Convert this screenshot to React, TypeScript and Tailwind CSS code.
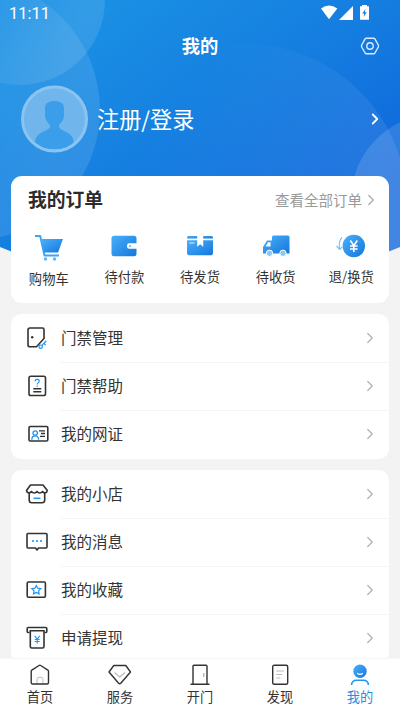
import type { ReactNode } from 'react';
import { ChevronRight } from 'lucide-react';

interface Item {
    label: string;
    icon: ReactNode;
}

const DARK = '#333333';
const BLUE = '#2196f3';

const orders: Item[] = [
    {
        label: '购物车',
        icon: (
            <svg width="30" height="28" viewBox="0 0 30 28" fill="none">
                <path d="M1 2H6.2L10.5 21.500H25" stroke="#3fa3f3" strokeWidth="2" strokeLinejoin="round" />
                <path d="M7.200 5H29L24 18.500H10.200Z" fill="url(#blue)" />
                <circle cx="11.5" cy="25" r="1.7" fill="#5fb4f5" />
                <circle cx="20.5" cy="25" r="1.7" fill="#5fb4f5" />
            </svg>
        ),
    },
    {
        label: '待付款',
        icon: (
            <svg width="26" height="22" viewBox="0 0 26 22" fill="none">
                <rect x="0.5" y="0.7" width="25" height="20.6" rx="2.5" fill="url(#blue)" />
                <path d="M26 8.3H18.2A2.2 2.2 0 0 0 16 10.5V11.5A2.2 2.2 0 0 0 18.2 13.7H26Z" fill="#fff" />
                <circle cx="19" cy="11" r="1" fill="#4aa9f3" />
            </svg>
        ),
    },
    {
        label: '待发货',
        icon: (
            <svg width="28" height="22" viewBox="0 0 28 22" fill="none">
                <path d="M1 3.500V2.500Q1 1 2.500 1H25.500Q27 1 27 2.500V3.500Z" fill="url(#blue)" />
                <path d="M1 5.200H27V18Q27 20.300 24.700 20.300H3.300Q1 20.300 1 18Z" fill="url(#blue)" />
                <path d="M11.200 0H17.200V11.800L14.200 9.200L11.200 11.800Z" fill="#fff" />
                <path d="M3.500 8H8.500" stroke="#d8efff" strokeWidth="1" />
            </svg>
        ),
    },
    {
        label: '待收货',
        icon: (
            <svg width="28" height="22" viewBox="0 0 28 22" fill="none">
                <path d="M10 2Q10 0.500 11.500 0.500H26Q27.500 0.500 27.500 2V18.500H1V12L5 5.500H10Z" fill="url(#blue)" />
                <path d="M3.500 11.500L6 7.300H8.500V11.500Z" fill="#fff" />
                <circle cx="7.500" cy="18.300" r="3.200" fill="#8ac8f8" stroke="#fff" strokeWidth="1" />
                <circle cx="21" cy="18.300" r="3.200" fill="#8ac8f8" stroke="#fff" strokeWidth="1" />
            </svg>
        ),
    },
    {
        label: '退/换货',
        icon: (
            <svg width="30" height="24" viewBox="0 0 30 24" fill="none">
                <circle cx="17.800" cy="12" r="11.200" fill="url(#blue)" />
                <path d="M6 3.500C3 6.500 2.800 10.500 3.700 15M0.500 12L3.700 15.500L6.200 13" stroke="#7bc1f6" strokeWidth="1.200" />
                <path d="M14.300 6.500L17.800 11.500L21.300 6.500M17.800 11.500V18M14 12H21.600M14 15H21.600" stroke="#fff" strokeWidth="1.600" />
            </svg>
        ),
    },
];

const doorMenu: Item[] = [
    {
        label: '门禁管理',
        icon: (
            <svg width="24" height="24" viewBox="0 0 24 24" fill="none">
                <path d="M5 2H17.500Q19 2 19 3.500V12.500L11.500 20.800H5Q3 20.800 3 19V4Q3 2 5 2Z" stroke={DARK} strokeWidth="1.600" />
                <circle cx="7.200" cy="11.300" r="1.200" fill={DARK} />
                <circle cx="15.700" cy="20.700" r="1.700" stroke={BLUE} strokeWidth="1.200" />
                <path d="M16.900 19.300L21.200 15M18.800 17.400L20.600 19.200" stroke={BLUE} strokeWidth="1.200" />
            </svg>
        ),
    },
    {
        label: '门禁帮助',
        icon: (
            <svg width="24" height="24" viewBox="0 0 24 24" fill="none">
                <rect x="4" y="2.300" width="16.500" height="19.200" rx="1.800" stroke={DARK} strokeWidth="1.600" />
                <path d="M10.200 7.200C10.200 4.800 14.200 4.800 14.200 7.200C14.200 8.900 12.200 8.800 12.200 10.500M12.200 11.500V12.700" stroke={BLUE} strokeWidth="1.200" />
                <path d="M8.300 14.800H16.300M8.300 17.800H16.300" stroke={DARK} strokeWidth="1.400" />
            </svg>
        ),
    },
    {
        label: '我的网证',
        icon: (
            <svg width="24" height="24" viewBox="0 0 24 24" fill="none">
                <rect x="4" y="4.500" width="18.800" height="14.500" rx="1.200" stroke={DARK} strokeWidth="1.600" />
                <circle cx="10.200" cy="11" r="2.200" stroke={BLUE} strokeWidth="1.300" />
                <path d="M6.800 17.700C6.800 12.600 13.600 12.600 13.600 17.700" stroke={BLUE} strokeWidth="1.300" />
                <path d="M14 8.800H20M16 11.500H20M15 14.300H20" stroke={DARK} strokeWidth="1.300" />
            </svg>
        ),
    },
];

const userMenu: Item[] = [
    {
        label: '我的小店',
        icon: (
            <svg width="24" height="24" viewBox="0 0 24 24" fill="none">
                <path d="M5.500 3H18L22.300 8.500C22 11.300 18.800 11.500 17.500 9.500C16 11.500 13.500 11.500 12 9.500C10.500 11.500 8 11.500 6.500 9.500C5 11.500 2 11.300 1.500 8.500Z" stroke={DARK} strokeWidth="1.600" strokeLinejoin="round" />
                <path d="M4.200 11V18Q4.200 20.800 6.700 20.800H17Q19.700 20.800 19.700 18V11" stroke={DARK} strokeWidth="1.600" />
                <path d="M8.500 16.300H15.500" stroke={BLUE} strokeWidth="1.500" />
            </svg>
        ),
    },
    {
        label: '我的消息',
        icon: (
            <svg width="24" height="24" viewBox="0 0 24 24" fill="none">
                <path d="M3 3.500H21Q22 3.500 22 4.500V17Q22 18 21 18H13.500L12 20L10.500 18H3Q2 18 2 17V4.500Q2 3.500 3 3.500Z" stroke={DARK} strokeWidth="1.600" strokeLinejoin="round" />
                <circle cx="8" cy="11" r="1.100" fill={BLUE} />
                <circle cx="12" cy="11" r="1.100" fill={BLUE} />
                <circle cx="16" cy="11" r="1.100" fill={BLUE} />
            </svg>
        ),
    },
    {
        label: '我的收藏',
        icon: (
            <svg width="24" height="24" viewBox="0 0 24 24" fill="none">
                <rect x="2.200" y="4" width="18.200" height="15.200" rx="1.200" stroke={DARK} strokeWidth="1.600" />
                <path d="M11.300 7.500L12.700 10.200L15.800 10.700L13.600 12.800L14.100 15.900L11.300 14.400L8.500 15.900L9 12.800L6.800 10.700L9.900 10.200Z" stroke={BLUE} strokeWidth="1.200" />
            </svg>
        ),
    },
    {
        label: '申请提现',
        icon: (
            <svg width="24" height="24" viewBox="0 0 24 24" fill="none">
                <path d="M4.500 6.500H3Q2.200 6.500 2.200 5.500V2.500Q2.200 1.500 3.200 1.500H20.800Q21.800 1.500 21.800 2.500V5.500Q21.800 6.500 21 6.500H19.500" stroke={DARK} strokeWidth="1.600" />
                <path d="M5.300 4.800H19V20.500Q19 22 17.500 22H6.800Q5.300 22 5.300 20.500Z" stroke={DARK} strokeWidth="1.600" />
                <path d="M9.700 9.800L12.200 13.200L14.700 9.800M12.200 13.200V17.500M9.700 13.500H14.700M9.700 15.500H14.700" stroke={BLUE} strokeWidth="1.100" />
            </svg>
        ),
    },
];

const tabs: Item[] = [
    {
        label: '首页',
        icon: (
            <svg width="24" height="24" viewBox="0 0 24 24" fill="none">
                <path d="M9 21V16.500Q9 14 12 14Q15 14 15 16.500V21" stroke="#bbb" />
                <path d="M11 2.500L3.800 7.200Q3.200 7.600 3.200 8.400V19.500Q3.200 21 4.700 21H19Q20.500 21 20.500 19.500V8.400Q20.500 7.600 19.900 7.200L12.700 2.500Q11.800 2 11 2.500Z" stroke={DARK} strokeWidth="1.400" />
            </svg>
        ),
    },
    {
        label: '服务',
        icon: (
            <svg width="24" height="24" viewBox="0 0 24 24" fill="none">
                <path d="M5.800 2.500H17.800L22.500 9L13 20Q11.700 21.400 10.400 20L1 9Z" stroke={DARK} strokeWidth="1.400" strokeLinejoin="round" />
                <path d="M6.500 9.500L11.800 14L17 9.500" stroke="#bbb" strokeWidth="1.200" />
            </svg>
        ),
    },
    {
        label: '开门',
        icon: (
            <svg width="24" height="24" viewBox="0 0 24 24" fill="none">
                <path d="M5 21.200V3.200Q5 2.300 5.900 2.300H18.100Q19 2.300 19 3.200V21.200M2.500 21.200H21.500" stroke={DARK} strokeWidth="1.400" />
                <path d="M15.800 10V14" stroke="#999" />
            </svg>
        ),
    },
    {
        label: '发现',
        icon: (
            <svg width="24" height="24" viewBox="0 0 24 24" fill="none">
                <rect x="4.700" y="2.300" width="15" height="18.900" rx="1.500" stroke={DARK} strokeWidth="1.400" />
                <path d="M8.300 8H15.800M8.300 11.500H14M8.300 15H12.500" stroke="#bbb" />
            </svg>
        ),
    },
    {
        label: '我的',
        icon: (
            <svg width="24" height="24" viewBox="0 0 24 24" fill="none">
                <circle cx="12" cy="8.200" r="6.700" fill="url(#blue)" />
                <path d="M9.200 10.200Q12 12.500 14.800 10.200" stroke="#fff" strokeWidth="1.200" />
                <path d="M3.500 22Q4 17.200 8.500 17.200H15.500Q20 17.200 20.500 22" stroke={BLUE} strokeWidth="1.600" />
            </svg>
        ),
    },
];

function Background() {
    return (
        <svg className="absolute left-0 top-0" width="400" height="300" viewBox="0 0 400 300">
            <defs>
                <linearGradient id="blue" x1="0" y1="0" x2="1" y2="1">
                    <stop stopColor="#4ab0fa" />
                    <stop offset="1" stopColor="#1477dc" />
                </linearGradient>
                <linearGradient id="header" gradientUnits="userSpaceOnUse" x1="100" y1="0" x2="280" y2="260">
                    <stop stopColor="#1a90e4" />
                    <stop offset="0.500" stopColor="#157ee0" />
                    <stop offset="1" stopColor="#0f66dc" />
                </linearGradient>
                <linearGradient id="glow" x1="0.300" y1="0" x2="1" y2="0.300">
                    <stop stopColor="#fff" stopOpacity="0" />
                    <stop offset="1" stopColor="#fff" stopOpacity="0.110" />
                </linearGradient>
                <linearGradient id="arc" x1="0.400" y1="0" x2="1" y2="0.400">
                    <stop stopColor="#fff" stopOpacity="0" />
                    <stop offset="1" stopColor="#fff" stopOpacity="0.100" />
                </linearGradient>
                <clipPath id="shape">
                    <path d="M0 0H400V247L380 255V280H20V255L0 247Z" />
                </clipPath>
            </defs>
            <g clipPath="url(#shape)">
                <rect width="400" height="300" fill="url(#header)" />
                <circle cx="-31" cy="110" r="131" fill="url(#glow)" />
                <circle cx="20" cy="0" r="85" fill="url(#glow)" />
                <circle cx="246" cy="205" r="161" fill="url(#arc)" />
                <circle cx="437" cy="200" r="86" fill="#fff" fillOpacity="0.130" />
            </g>
        </svg>
    );
}

function StatusBar() {
    return (
        <div className="flex h-[27px] shrink-0 items-center justify-between pl-[9px] pr-[30px] text-white">
            <span className="pt-[2px] font-[Roboto] text-[16.500px] leading-none">11:11</span>
            <svg className="-mt-[2px]" width="50" height="17" viewBox="0 0 50 17" fill="none">
                <path d="M1 4.500Q9 -1.500 17.300 4.500L9 15.300Z" fill="#fff" />
                <path d="M33 2V16H19Z" fill="#fff" />
                <path d="M42 1H47V2.300H49V15.800H40V2.300H42Z" fill="#fff" />
                <path d="M45.500 5L42.300 9.500H44.200L43.500 13L46.700 8.300H44.800Z" fill="#1677df" />
            </svg>
        </div>
    );
}

function MenuCard({ items }: { items: Item[] }) {
    return (
        <div className="rounded-[10px] bg-white">
            {items.map((item, i) => (
                <div key={item.label} className="flex h-[48.200px] items-center pl-[14px]">
                    <div className="mr-3 shrink-0">{item.icon}</div>
                    <div className={`flex h-full flex-1 items-center justify-between pr-[10px] ${i > 0 ? 'border-t border-[#f4f4f4]' : ''}`}>
                        <span className={`text-[15.500px] text-[#333] ${i > 0 ? '-mt-[2px]' : ''}`}>{item.label}</span>
                        <ChevronRight className={`h-[18px] w-[18px] text-[#b2b2b2] ${i > 0 ? '-mt-px' : ''}`} strokeWidth={1.7} />
                    </div>
                </div>
            ))}
        </div>
    );
}

export default function App() {
    return (
        <div className="relative flex h-[711px] w-[400px] flex-col overflow-hidden bg-[#f3f3f3] font-['Noto_Sans_CJK_SC',sans-serif]">
            <Background />

            <div className="relative flex min-h-0 flex-1 flex-col overflow-hidden">
                <StatusBar />

                {/* Title */}
                <div className="flex h-[37px] shrink-0 items-center px-5 text-white">
                    <div className="w-5" />
                    <h1 className="flex-1 pt-px text-center text-[18.300px] font-bold">我的</h1>
                    <svg width="20" height="18" viewBox="0 0 20 18" fill="none" stroke="#d9ecff" strokeWidth="1.400">
                        <path d="M6.300 1.200H13.700Q14.500 1.200 14.900 1.900L18.300 8Q18.800 9 18.300 10L14.900 16Q14.500 16.800 13.700 16.800H6.300Q5.500 16.800 5.100 16L1.700 10Q1.200 9 1.700 8L5.100 1.900Q5.500 1.200 6.300 1.200Z" />
                        <circle cx="10" cy="9" r="3.200" />
                    </svg>
                </div>

                {/* Profile */}
                <div className="flex h-[112px] shrink-0 items-center pl-[21px] pr-4 text-white">
                    <svg className="-mt-[3px]" width="67" height="68" viewBox="0 0 67 68">
                        <defs>
                            <clipPath id="face">
                                <circle cx="33.500" cy="34" r="30.500" />
                            </clipPath>
                        </defs>
                        <circle cx="33.500" cy="34" r="32" fill="#70b5ec" stroke="#8cc4f1" strokeWidth="3" />
                        <path clipPath="url(#face)" d="M33.500 16C39 16 43 18 43 23V30C43 35 40 38 38 40V42C40 47 53 46 53 59C45 66 22 66 14 59C14 46 27 47 29 42V40C27 38 24 35 24 30V23C24 18 28 16 33.500 16Z" fill="#3a9eea" />
                    </svg>
                    <span className="-mt-[2px] ml-[9px] flex-1 text-[22.200px]">注册/登录</span>
                    <ChevronRight className="-mt-[2px] h-[18px] w-[18px]" strokeWidth={2.400} />
                </div>

                <div className="flex flex-col gap-[11px] px-[11px]">
                    {/* Orders */}
                    <div className="h-[127px] rounded-[11px] bg-white">
                        <div className="flex h-[47px] items-center justify-between pl-[17px] pr-[9px]">
                            <h2 className="text-[18.800px] font-bold text-[#2b2b2b]">我的订单</h2>
                            <div className="flex items-center text-[14.500px] text-[#999]">
                                查看全部订单
                                <ChevronRight className="h-[18px] w-[18px] text-[#aaa]" strokeWidth={1.700} />
                            </div>
                        </div>
                        <div className="grid grid-cols-5">
                            {orders.map((order, i) => (
                                <div key={order.label} className={`flex flex-col items-center ${i === 0 ? 'pt-[2px]' : ''}`}>
                                    <div className="flex h-[45px] items-center">{order.icon}</div>
                                    <span className="-mt-px text-[13.300px] leading-5 text-[#333]">{order.label}</span>
                                </div>
                            ))}
                        </div>
                    </div>

                    <MenuCard items={doorMenu} />
                    <MenuCard items={userMenu} />
                </div>
            </div>

            {/* Tab bar */}
            <nav className="relative grid h-[53px] shrink-0 grid-cols-5 border-t border-[#f7f7f7] bg-white">
                {tabs.map((tab, i) => (
                    <div key={tab.label} className={`flex flex-col items-center pt-1 ${i === 4 ? 'text-[#2490e8]' : 'text-[#333]'}`}>
                        {tab.icon}
                        <span className="text-[13.200px] leading-5">{tab.label}</span>
                    </div>
                ))}
            </nav>
        </div>
    );
}
